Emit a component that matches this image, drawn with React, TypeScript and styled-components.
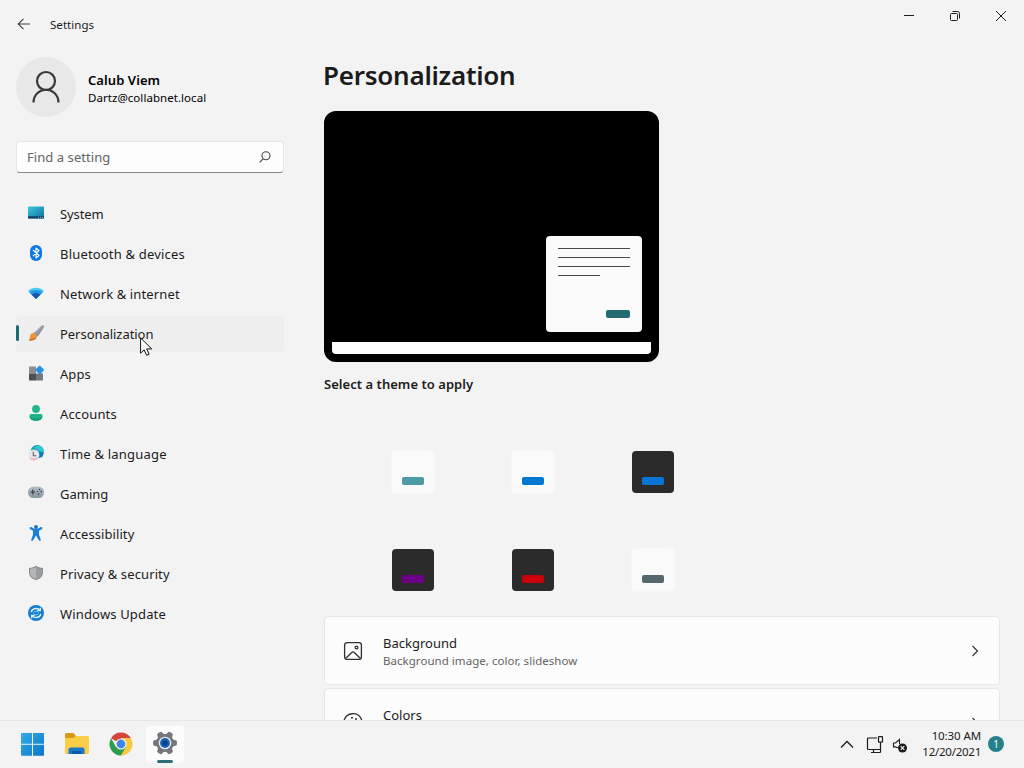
import React from 'react';
import styled, { createGlobalStyle } from 'styled-components';

const GlobalStyle = createGlobalStyle`
  * { box-sizing: border-box; }
  body {
    margin: 0;
    background: #f3f3f3;
    color: #1b1b1b;
    font-family: "Noto Sans", "Open Sans", sans-serif;
    font-size: 14px;
    overflow: hidden;
  }
  svg { display: block; flex: none; }
`;

const Desktop = styled.div`
  position: relative;
  width: 1024px;
  height: 768px;
  display: flex;
  flex-direction: column;
  overflow: hidden;
`;

const SettingsWindow = styled.div`
  height: 720px;
  flex: none;
  display: flex;
  overflow: hidden;
`;

const Sidebar = styled.aside`
  width: 300px;
  flex: none;
  padding: 0 16px;
  display: flex;
  flex-direction: column;
`;

const TitleBar = styled.header`
  height: 48px;
  display: flex;
  align-items: center;
  gap: 18px;
  font-size: 11.5px;
  letter-spacing: 0.05px;
`;

const Profile = styled.section`
  margin-top: 9px;
  height: 60px;
  display: flex;
  align-items: center;
  gap: 12px;
`;

const ProfileText = styled.div`
  padding-top: 2px;
`;

const Avatar = styled.div`
  width: 60px;
  height: 60px;
  border-radius: 50%;
  background: #e8e8e8;
  display: flex;
  align-items: center;
  justify-content: center;
`;

const UserName = styled.div`
  font-weight: 600;
  font-size: 13px;
  line-height: 20px;
  letter-spacing: 0.08px;
  color: #000;
`;

const UserMail = styled.div`
  font-size: 11.5px;
  line-height: 16px;
  letter-spacing: 0.05px;
  color: #000;
`;

const SearchBox = styled.div`
  margin-top: 24px;
  height: 32px;
  padding: 0 12px 0 10px;
  display: flex;
  align-items: center;
  justify-content: space-between;
  background: #fdfdfd;
  border: 1px solid #e5e5e5;
  border-bottom-color: #868686;
  border-radius: 4px;
  color: #636363;
  letter-spacing: 0.06px;
  font-size: 13px;
`;

const Nav = styled.nav`
  margin-top: 23px;
  display: flex;
  flex-direction: column;
  gap: 4px;
`;

const NavItem = styled.div<{ $active?: boolean }>`
  height: 36px;
  display: flex;
  align-items: center;
  border-radius: 4px;
  background: ${(p) => (p.$active ? '#eeeeee' : 'transparent')};
`;

const ActiveBar = styled.span<{ $active?: boolean }>`
  width: 3px;
  height: 16px;
  margin: 0 9px 2px 0;
  border-radius: 2px;
  background: ${(p) => (p.$active ? '#1f686f' : 'transparent')};
`;

const NavIcon = styled.span`
  margin-bottom: 2px;
`;

const NavLabel = styled.span<{ $spacing: number }>`
  margin-left: 16px;
  font-size: 13px;
  letter-spacing: ${(p) => p.$spacing}px;
`;

const Main = styled.main`
  flex: 1;
  display: flex;
  flex-direction: column;
  padding: 0 24px;
`;

const WindowControls = styled.div`
  height: 32px;
  flex: none;
  margin-right: -24px;
  display: flex;
  justify-content: flex-end;
`;

const ControlButton = styled.div`
  width: 46px;
  height: 32px;
  display: flex;
  align-items: center;
  justify-content: center;
`;

const PageTitle = styled.h1`
  margin: 25px 0 0 -1px;
  font-size: 26px;
  line-height: 36px;
  font-weight: 600;
  letter-spacing: -0.25px;
`;

const Preview = styled.div`
  margin-top: 18px;
  width: 335px;
  height: 251px;
  flex: none;
  border: 8px solid #000;
  border-radius: 12px;
  background: #000;
  display: flex;
  flex-direction: column;
  justify-content: flex-end;
`;

const PreviewWindow = styled.div`
  align-self: flex-end;
  width: 96px;
  height: 96px;
  margin: 0 9px 10px 0;
  padding: 12px;
  border-radius: 4px;
  background: #fafafa;
  display: flex;
  flex-direction: column;
  gap: 8px;
`;

const PreviewLine = styled.div<{ $width: number }>`
  width: ${(p) => p.$width}px;
  height: 1px;
  background: #4a4a4a;
`;

const PreviewButton = styled.div`
  width: 24px;
  height: 8px;
  margin: auto 0 2px auto;
  border-radius: 2px;
  background: #226b72;
`;

const PreviewTaskbar = styled.div`
  height: 12px;
  border-radius: 0 0 4px 4px;
  background: #fff;
`;

const SectionTitle = styled.h2`
  margin: 12px 0 0;
  font-size: 13px;
  line-height: 20px;
  font-weight: 600;
  letter-spacing: 0.04px;
`;

const ThemeGrid = styled.div`
  margin: 57px 0 0 68px;
  display: grid;
  grid-template-columns: repeat(3, 42px);
  gap: 56px 78px;
`;

const ThemeTile = styled.div<{ $dark?: boolean }>`
  height: 42px;
  padding: 26px 10px 8px;
  border-radius: 4px;
  background: ${(p) => (p.$dark ? '#2b2b2b' : '#fafafa')};
  box-shadow: ${(p) => (p.$dark ? 'none' : '0 0 2px 1px #f7f7f7')};
`;

const ThemeAccent = styled.div<{ $color: string }>`
  width: 22px;
  height: 8px;
  border-radius: 2px;
  background: ${(p) => p.$color};
`;

const CardList = styled.div`
  margin-top: 25px;
  display: flex;
  flex-direction: column;
  gap: 3px;
`;

const Card = styled.div`
  height: 69px;
  flex: none;
  padding: 0 17px 0 18px;
  display: flex;
  align-items: center;
  background: #fcfcfc;
  border: 1px solid #e7e7e7;
  border-radius: 4px;
`;

const CardText = styled.div`
  flex: 1;
  margin-left: 20px;
  padding-top: 1px;
`;

const CardTitle = styled.div`
  margin-bottom: 1px;
  font-size: 13px;
  line-height: 18px;
  letter-spacing: 0;
`;

const CardDescription = styled.div`
  font-size: 11.5px;
  line-height: 16px;
  letter-spacing: 0.04px;
  color: #636363;
`;

const Taskbar = styled.footer`
  height: 48px;
  padding: 0 20px 0 10px;
  display: flex;
  align-items: center;
  justify-content: space-between;
  background: #f3f3f3;
  border-top: 1px solid #e6e6e6;
`;

const TaskGroup = styled.div`
  display: flex;
  align-items: center;
`;

const TaskButton = styled.div`
  width: 44px;
  height: 47px;
  padding: 0 0 1px 1px;
  display: flex;
  align-items: center;
  justify-content: center;
`;

const ActiveTask = styled.div`
  width: 38px;
  height: 37px;
  margin-top: 1px;
  padding-top: 5px;
  border-radius: 4px;
  background: #fcfcfc;
  display: flex;
  flex-direction: column;
  align-items: center;
  justify-content: space-between;
`;

const RunIndicator = styled.div`
  width: 16px;
  height: 3px;
  border-radius: 2px;
  background: #2b6f73;
`;

const Tray = styled(TaskGroup)`
  gap: 12px;
`;

const StatusIcons = styled.div`
  display: flex;
  align-items: center;
  gap: 8px;
`;

const TrayArrow = styled.span`
  margin-right: 4px;
`;

const Clock = styled.div`
  width: 61px;
  display: flex;
  flex-direction: column;
  align-items: flex-end;
  font-size: 11.5px;
  line-height: 16px;
  white-space: nowrap;
  padding-bottom: 2px;
`;

const ClockLine = styled.span<{ $spacing: number }>`
  letter-spacing: ${(p) => p.$spacing}px;
`;

const Badge = styled.div`
  width: 16px;
  height: 16px;
  margin: 0 0 2px -5px;
  border-radius: 50%;
  background: #24808a;
  color: #fff;
  font-size: 10px;
  line-height: 16px;
  text-align: center;
`;

const Pointer = styled.svg`
  position: absolute;
  left: 140px;
  top: 337px;
`;

const icon = { width: 16, height: 16, viewBox: '0 0 16 16' };

const BackArrow = () => (
  <svg width="16" height="16" viewBox="0 0 16 16" fill="none" stroke="#444" strokeWidth="1.1">
    <path d="M14 8H2.5M7.5 2.8 2.2 8l5.3 5.2" />
  </svg>
);

const SystemIcon = () => (
  <svg {...icon}>
    <defs>
      <linearGradient id="sys" x1="0" y1="0" x2="1" y2="1">
        <stop offset="0" stopColor="#3cc9dc" />
        <stop offset="1" stopColor="#0a6fa4" />
      </linearGradient>
    </defs>
    <rect y="1.500" width="16" height="12" rx="0.7" fill="url(#sys)" />
    <path d="M0 11.200h16v1.600a.7.7 0 0 1-.7.7H.7a.7.7 0 0 1-.7-.7z" fill="#0b4166" />
    <path d="M10 12.400h1M12 12.400h1M14 12.400h1" stroke="#c9e7f0" strokeWidth=".7" />
  </svg>
);

const BluetoothIcon = () => (
  <svg {...icon}>
    <rect x="2" width="12" height="16" rx="6" fill="#0c78e4" />
    <path d="M5 5l6 5.5L8 13V3l3 2.5L5 11" fill="none" stroke="#fff" strokeWidth="1.1" strokeLinejoin="round" />
  </svg>
);

const NetworkIcon = () => (
  <svg {...icon}>
    <path d="M0 6C4.3 1.8 11.7 1.8 16 6L8 14z" fill="#4cc9ee" />
    <path d="M1.500 7.500c3.600-3.200 9.400-3.200 13 0L8 14z" fill="#1f96df" />
    <path d="M3.700 9.700c2.400-2.200 6.200-2.200 8.600 0L8 14z" fill="#1557b0" />
  </svg>
);

const BrushIcon = () => (
  <svg {...icon}>
    <defs>
      <linearGradient id="brush" x1="0" y1="0" x2="1" y2="1">
        <stop offset="0" stopColor="#d5dade" />
        <stop offset="1" stopColor="#56636c" />
      </linearGradient>
    </defs>
    <path d="M13.500 .5c1.700-1.100 3.200.4 2.200 2.200L9.800 11.500 5.800 8z" fill="url(#brush)" />
    <path d="M6.600 7l3.600 3.100-1.300 1.700L5 8.500z" fill="#8d979d" />
    <path d="M5.300 8.100c1.800.2 3.700 1.700 3.600 3.500C8.700 14.500 4.500 16 .7 15.500c1.500-1.200.7-2.600 1.300-4.500.5-1.700 1.700-3 3.300-2.900z" fill="#ec973f" />
    <path d="M3 13.500c1.700.6 4-.4 5.700-1.500C8.100 14.600 4.300 16 .7 15.500 1.700 15 2 14.300 3 13.500z" fill="#d1701f" />
  </svg>
);

const AppsIcon = () => (
  <svg {...icon}>
    <rect x="1" y="1.500" width="7" height="7" fill="#8b8f92" />
    <rect x="1" y="8.500" width="7" height="7" fill="#4b5055" />
    <rect x="8" y="8.500" width="7" height="7" fill="#73787c" />
    <rect x="8.400" y="1.600" width="6.600" height="6.600" rx=".6" fill="#2793e6" transform="rotate(45 11.700 4.900)" />
  </svg>
);

const AccountsIcon = () => (
  <svg {...icon}>
    <circle cx="8" cy="4" r="3.900" fill="#22b48c" />
    <path d="M3.300 9h9.400A1.900 1.900 0 0 1 14.600 11c0 3-3 4.800-6.600 4.800S1.400 14 1.400 11A1.900 1.900 0 0 1 3.300 9z" fill="#1eb488" />
    <path d="M1.700 12.600c3 1.500 9.600 1.500 12.600 0-.9 2.100-3.300 3.200-6.300 3.200s-5.400-1.100-6.300-3.200z" fill="#129b7c" />
  </svg>
);

const TimeIcon = () => (
  <svg {...icon}>
    <circle cx="9.200" cy="6.800" r="6.700" fill="#199aae" />
    <path d="M4 2.500C8 4 8 0 11 .4c3.500.7 5.500 4 4.800 7.400C14 6 10 7 8 3.800z" fill="#35c5cf" />
    <path d="M11.500 7l4.200 1-1.700 4.500-2.500-1z" fill="#1175c8" />
    <circle cx="5.800" cy="10" r="5.500" fill="#e9e6e9" />
    <path d="M1 12.500c2.500 1 6.700 1 9.500 0-1.500 4-8 4-9.500 0z" fill="#edbdc4" />
    <path d="M5.300 6.800v4h3" fill="none" stroke="#5c6470" strokeWidth="1.100" />
  </svg>
);

const GamingIcon = () => (
  <svg {...icon}>
    <defs>
      <linearGradient id="pad" x1="0" y1="0" x2="0" y2="1">
        <stop offset="0" stopColor="#b7c2c7" />
        <stop offset="1" stopColor="#84949c" />
      </linearGradient>
    </defs>
    <rect y="1.500" width="16" height="11.500" rx="5.500" fill="url(#pad)" />
    <path d="M4.800 4.500v5M2.300 7h5" stroke="#333e45" strokeWidth="1.200" />
    <g fill="#333e45">
      <circle cx="11.500" cy="4.500" r=".8" />
      <circle cx="9.500" cy="6.500" r=".7" />
      <circle cx="13.300" cy="6.500" r=".8" />
      <circle cx="10.500" cy="9" r=".8" />
    </g>
  </svg>
);

const AccessibilityIcon = () => (
  <svg {...icon}>
    <circle cx="8" cy="2" r="1.900" fill="#176fc1" />
    <path d="M1.700 2.500c.4-.8 1.300-.7 1.900-.3C6.500 4.200 9.500 4.200 12.400 2.200c.6-.4 1.500-.5 1.900.3.4.7 0 1.300-.7 1.700L11 5.800v3.700l1.700 5c.4 1.300-1.200 1.900-1.800.8L8 10.500l-2.900 4.800c-.6 1.100-2.200.5-1.800-.8l1.700-5V5.800L2.400 4.200c-.7-.4-1.100-1-.7-1.700z" fill="#1680d8" />
  </svg>
);

const ShieldIcon = () => (
  <svg {...icon}>
    <path d="M8 .8c2 1.500 4.400 2 7 2.100v4.600c0 3.800-3 6.300-7 7.700-4-1.400-7-3.900-7-7.700V2.900C3.600 2.800 6 2.300 8 .8z" fill="#878b8e" />
    <path d="M8 2c1.800 1.200 3.800 1.700 6 1.800v3.700c0 3.200-2.500 5.300-6 6.600z" fill="#9b9ea0" />
    <path d="M8 2C6.200 3.200 4.200 3.700 2 3.800v3.700c0 3.200 2.500 5.300 6 6.600z" fill="#b3b6b7" />
  </svg>
);

const UpdateIcon = () => (
  <svg {...icon}>
    <circle cx="8" cy="8" r="8" fill="#147fd1" />
    <path d="M3.200 7C4 3.200 9.500 2.300 12 5.300M12.300 2.800v2.900H9.500M12.800 9c-.8 3.800-6.300 4.700-8.800 1.700M3.700 13.200v-2.900h2.800" fill="none" stroke="#e6f6ff" strokeWidth="1.300" />
    <path d="M5.500 7.300c1.500-1.500 3.500-1.500 5 0M10.500 8.800c-1.500 1.500-3.500 1.500-5 0" fill="none" stroke="#8dd4f7" />
  </svg>
);

const Chevron = () => (
  <svg width="14" height="14" viewBox="0 0 14 14" fill="none" stroke="#333" strokeWidth="1.200">
    <path d="M4.500 2l5 5-5 5" />
  </svg>
);

const PictureIcon = () => (
  <svg width="20" height="20" viewBox="0 0 20 20" fill="none" stroke="#303030" strokeWidth="1.300">
    <rect x="1.600" y="1.600" width="16.800" height="16.800" rx="2.500" />
    <circle cx="13.500" cy="6.500" r="1.400" />
    <path d="M2.500 17.500l6.300-6a1.700 1.700 0 0 1 2.400 0l6.300 6" />
  </svg>
);

const PaletteIcon = () => (
  <svg width="20" height="20" viewBox="0 0 20 20" fill="none" stroke="#303030" strokeWidth="1.300">
    <path d="M1 7.500C3.500-1 15-1.500 18.300 6c2.200 5.500-.8 12-5.800 12.500-4 .2-1.500-4.500-4-6-2-1-3 1.500-5 .5C1 12 .4 9.500 1 7.500z" />
    <g fill="#303030" stroke="none">
      <circle cx="9" cy="4.700" r="1" />
      <circle cx="13" cy="6" r="1" />
      <circle cx="15" cy="10" r="1" />
    </g>
  </svg>
);

const WindowsLogo = () => (
  <svg width="24" height="24" viewBox="0 0 24 24">
    <defs>
      <linearGradient id="win" gradientUnits="userSpaceOnUse" x1="0" y1="0" x2="24" y2="24">
        <stop offset="0" stopColor="#35aee5" />
        <stop offset="1" stopColor="#0873c9" />
      </linearGradient>
    </defs>
    <path d="M.5 1H11v10.700H0V1.500zM12 1h10.500l.5.5v10.200H12zM0 12.700h11v11H.5l-.5-.5zM12 12.700h11v10.500l-.5.5H12z" fill="url(#win)" />
  </svg>
);

const FolderIcon = () => (
  <svg width="26" height="24" viewBox="0 0 26 24">
    <path d="M1 2.500A1.500 1.500 0 0 1 2.500 1h7L12 4l-2.500 3H1z" fill="#d89a16" />
    <path d="M9.500 6l2.300-2H23.500A1.500 1.500 0 0 1 25 5.500V20.500A1.500 1.500 0 0 1 23.500 22h-21A1.500 1.500 0 0 1 1 20.500V6z" fill="#f9ce46" />
    <path d="M4.500 22V17.500A2 2 0 0 1 6.500 15.500h12a2 2 0 0 1 2 2V22z" fill="#1677cb" />
    <path d="M8 22v-3h9v3z" fill="#0d59a8" />
  </svg>
);

const ChromeIcon = () => (
  <svg width="24" height="24" viewBox="0 0 24 24">
    <path d="M12 12L2.040 6.250A11.500 11.500 0 0 1 21.960 6.250H12z" fill="#d6453b" />
    <path d="M12 6.250H21.960A11.500 11.500 0 0 1 12 23.500L16.980 14.900z" fill="#f7c93b" />
    <path d="M7.020 14.880L2.040 6.250A11.500 11.500 0 0 0 12 23.500l4.980-8.600L12 12z" fill="#2f9c4d" />
    <circle cx="12" cy="12" r="5.600" fill="#f4f4f4" />
    <circle cx="12" cy="12" r="4.400" fill="#4285e8" />
  </svg>
);

const GearIcon = () => (
  <svg width="24" height="24" viewBox="0 0 24 24">
    <g fill="#73777b">
      <circle cx="12" cy="12" r="9" />
      {[30, 90, 150, 210, 270, 330].map((a) => (
        <path key={a} d="M8.400 4.500L9.500.5Q12-.5 14.500.5L15.600 4.500z" transform={`rotate(${a} 12 12)`} />
      ))}
    </g>
    <circle cx="12" cy="12" r="6.300" fill="#e9edf1" />
    <circle cx="12" cy="12" r="4.900" fill="#1763b4" />
    <circle cx="12" cy="12" r="2.600" fill="#0a3f83" />
  </svg>
);

const MonitorIcon = () => (
  <svg width="18" height="18" viewBox="0 0 18 18" fill="none" stroke="#1b1b1b" strokeWidth="1.200">
    <path d="M11 2H2.500a1 1 0 0 0-1 1v9.500a1 1 0 0 0 1 1h12M5 16.500h9.500M7.500 13.500v3" />
    <rect x="12.500" y=".7" width="4" height="5.500" rx=".7" />
    <path d="M14.500 6.500v10" />
  </svg>
);

const MutedIcon = () => (
  <svg width="16" height="16" viewBox="0 0 16 16">
    <path d="M6 10.500H4.500l-1-.6H1.500V6h2L7.500 2.500V7" fill="none" stroke="#1b1b1b" strokeWidth="1.100" />
    <circle cx="10.500" cy="11" r="4.500" fill="#1b1b1b" />
    <path d="M8.700 9.200l3.600 3.600M12.300 9.200l-3.600 3.600" stroke="#fff" strokeWidth="1.100" />
  </svg>
);

const navItems = [
  { label: 'System', Icon: SystemIcon, spacing: -0.1 },
  { label: 'Bluetooth & devices', Icon: BluetoothIcon, spacing: 0.18 },
  { label: 'Network & internet', Icon: NetworkIcon, spacing: 0.13 },
  { label: 'Personalization', Icon: BrushIcon, spacing: -0.04 },
  { label: 'Apps', Icon: AppsIcon, spacing: 0.06 },
  { label: 'Accounts', Icon: AccountsIcon, spacing: 0.15 },
  { label: 'Time & language', Icon: TimeIcon, spacing: 0.2 },
  { label: 'Gaming', Icon: GamingIcon, spacing: 0 },
  { label: 'Accessibility', Icon: AccessibilityIcon, spacing: 0.08 },
  { label: 'Privacy & security', Icon: ShieldIcon, spacing: 0.12 },
  { label: 'Windows Update', Icon: UpdateIcon, spacing: 0.16 },
];

const themes = [
  { accent: '#4a9ba5', dark: false },
  { accent: '#0078cf', dark: false },
  { accent: '#0b75d6', dark: true },
  { accent: '#6b0087', dark: true },
  { accent: '#cb0209', dark: true },
  { accent: '#56686d', dark: false },
];

export default function App() {
  return (
    <Desktop>
      <GlobalStyle />
      <SettingsWindow>
        <Sidebar>
          <TitleBar>
            <BackArrow />
            <span>Settings</span>
          </TitleBar>
          <Profile>
            <Avatar>
              <svg width="30" height="34" viewBox="0 0 30 34" fill="none" stroke="#383838" strokeWidth="2.200">
                <circle cx="15" cy="11" r="9" />
                <path d="M2.500 32.500C3 15.500 27 15.500 27.500 32.500" />
              </svg>
            </Avatar>
            <ProfileText>
              <UserName>Calub Viem</UserName>
              <UserMail>Dartz@collabnet.local</UserMail>
            </ProfileText>
          </Profile>
          <SearchBox>
            <span>Find a setting</span>
            <svg width="12" height="12" viewBox="0 0 12 12" fill="none" stroke="#444" strokeWidth="1.100">
              <circle cx="7" cy="4.800" r="4" />
              <path d="M4.200 7.800L.6 11.400" />
            </svg>
          </SearchBox>
          <Nav>
            {navItems.map(({ label, Icon, spacing }) => {
              const active = label === 'Personalization';
              return (
                <NavItem key={label} $active={active}>
                  <ActiveBar $active={active} />
                  <NavIcon><Icon /></NavIcon>
                  <NavLabel $spacing={spacing}>{label}</NavLabel>
                </NavItem>
              );
            })}
          </Nav>
        </Sidebar>
        <Main>
          <WindowControls>
            <ControlButton>
              <svg width="12" height="12" viewBox="0 0 12 12" stroke="#1b1b1b"><path d="M1 5.500h10" /></svg>
            </ControlButton>
            <ControlButton>
              <svg width="12" height="12" viewBox="0 0 12 12" fill="none" stroke="#1b1b1b">
                <rect x="1.500" y="3.500" width="7" height="7" rx="1" />
                <path d="M3.500 1.500h5a2 2 0 0 1 2 2v5" />
              </svg>
            </ControlButton>
            <ControlButton>
              <svg width="12" height="12" viewBox="0 0 12 12" stroke="#1b1b1b"><path d="M1 1l10 10M11 1L1 11" /></svg>
            </ControlButton>
          </WindowControls>
          <PageTitle>Personalization</PageTitle>
          <Preview>
            <PreviewWindow>
              <PreviewLine $width={72} />
              <PreviewLine $width={72} />
              <PreviewLine $width={72} />
              <PreviewLine $width={42} />
              <PreviewButton />
            </PreviewWindow>
            <PreviewTaskbar />
          </Preview>
          <SectionTitle>Select a theme to apply</SectionTitle>
          <ThemeGrid>
            {themes.map((t) => (
              <ThemeTile key={t.accent} $dark={t.dark}>
                <ThemeAccent $color={t.accent} />
              </ThemeTile>
            ))}
          </ThemeGrid>
          <CardList>
            <Card>
              <PictureIcon />
              <CardText>
                <CardTitle>Background</CardTitle>
                <CardDescription>Background image, color, slideshow</CardDescription>
              </CardText>
              <Chevron />
            </Card>
            <Card>
              <PaletteIcon />
              <CardText>
                <CardTitle>Colors</CardTitle>
                <CardDescription>&nbsp;</CardDescription>
              </CardText>
              <Chevron />
            </Card>
          </CardList>
        </Main>
      </SettingsWindow>
      <Taskbar>
        <TaskGroup>
          <TaskButton><WindowsLogo /></TaskButton>
          <TaskButton><FolderIcon /></TaskButton>
          <TaskButton><ChromeIcon /></TaskButton>
          <TaskButton>
            <ActiveTask>
              <GearIcon />
              <RunIndicator />
            </ActiveTask>
          </TaskButton>
        </TaskGroup>
        <Tray>
          <StatusIcons>
            <TrayArrow>
              <svg width="14" height="14" viewBox="0 0 14 14" fill="none" stroke="#1b1b1b" strokeWidth="1.300">
                <path d="M1 9.500l6-6 6 6" />
              </svg>
            </TrayArrow>
            <MonitorIcon />
            <MutedIcon />
          </StatusIcons>
          <Clock>
            <ClockLine $spacing={-0.1}>10:30 AM</ClockLine>
            <ClockLine $spacing={-0.25}>12/20/2021</ClockLine>
          </Clock>
          <Badge>1</Badge>
        </Tray>
      </Taskbar>
      <Pointer width="13" height="20" viewBox="0 0 13 20">
        <path d="M.6 1v15.200l3.600-3.400 2.400 5.500 2.500-1.100-2.400-5.300h5z" fill="#fff" stroke="#111" />
      </Pointer>
    </Desktop>
  );
}
